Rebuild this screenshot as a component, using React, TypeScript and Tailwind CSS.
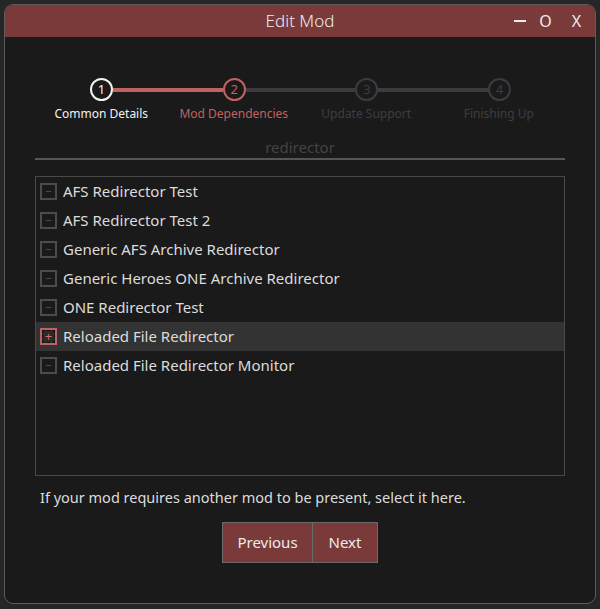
import React from 'react';

const steps = [
  { n: 1, label: 'Common Details', state: 'done' },
  { n: 2, label: 'Mod Dependencies', state: 'active' },
  { n: 3, label: 'Update Support', state: 'todo' },
  { n: 4, label: 'Finishing Up', state: 'todo' },
];

const mods = [
  { name: 'AFS Redirector Test', checked: false },
  { name: 'AFS Redirector Test 2', checked: false },
  { name: 'Generic AFS Archive Redirector', checked: false },
  { name: 'Generic Heroes ONE Archive Redirector', checked: false },
  { name: 'ONE Redirector Test', checked: false },
  { name: 'Reloaded File Redirector', checked: true },
  { name: 'Reloaded File Redirector Monitor', checked: false },
];

const circleClass: Record<string, string> = {
  done: 'border-[#f2f2f2] text-[#f2f2f2]',
  active: 'border-[#c06262] text-[#c06262]',
  todo: 'border-[#3c3c40] text-[#3c3c40]',
};

const labelClass: Record<string, string> = {
  done: 'text-[#f2f2f2]',
  active: 'text-[#c06262]',
  todo: 'text-[#3e3e42]',
};

const Stepper: React.FC = () => (
  <div className="mt-[41px]">
    {/* circles joined by lines */}
    <div className="flex items-center pl-[55px] pr-[54px]">
      {steps.map((s, i) => (
        <React.Fragment key={s.n}>
          <div
            className={`w-[23px] h-[23px] shrink-0 rounded-full border-2 flex items-center justify-center text-[13px] leading-none ${circleClass[s.state]}`}
          >
            {s.n}
          </div>
          {i < steps.length - 1 && (
            <div className={`flex-1 h-[4px] ${i === 0 ? 'bg-[#c06262]' : 'bg-[#3c3c40]'}`} />
          )}
        </React.Fragment>
      ))}
    </div>
    <div className="grid grid-cols-4 mt-[5px] text-[12px] leading-[16px] text-center">
      {steps.map(s => (
        <div key={s.n} className={labelClass[s.state]}>
          {s.label}
        </div>
      ))}
    </div>
  </div>
);

const CheckBox: React.FC<{ checked: boolean }> = ({ checked }) =>
  checked ? (
    <div className="w-[17px] h-[17px] shrink-0 border-2 border-[#c06262] bg-[#2a2a2a] flex items-center justify-center">
      <div className="w-[13px] h-[13px] border border-dashed border-[#111] flex items-center justify-center text-[#d06a6a] text-[13px] leading-none">
        +
      </div>
    </div>
  ) : (
    <div className="w-[17px] h-[17px] shrink-0 border-2 border-[#4c4c4c] flex items-center justify-center">
      <div className="w-[5px] h-px bg-[#4a4a4a]" />
    </div>
  );

export default function App() {
  return (
    <div
      className="w-[600px] h-[609px] bg-[#262626] pt-[4px] px-[4px] pb-[5px]"
      style={{ fontFamily: '"Noto Sans", "Open Sans", sans-serif' }}
    >
      <div className="h-full rounded-[9px] border border-[#5c5c5c] bg-[#1a1a1a] overflow-hidden flex flex-col">
        {/* title bar */}
        <div className="h-[32px] shrink-0 bg-[#7a3a3a] flex items-center relative">
          <div className="flex-1 text-center text-[17px] font-light text-[#ececec]">Edit Mod</div>
          <div className="absolute right-0 top-0 h-full flex items-center text-[#ececec]">
            <div className="w-[27px] flex justify-center pl-[2px]">
              <div className="w-[12px] h-[1.5px] bg-[#ececec]" />
            </div>
            <div className="w-[27px] text-center text-[16px]">O</div>
            <div className="w-[36px] text-center text-[16px] pr-[1px]">X</div>
          </div>
        </div>

        <div className="px-[30px] flex flex-col">
          <Stepper />

          {/* search */}
          <div className="mt-[15px] h-[23px] border-b-2 border-[#555] text-center text-[15px] leading-[20px] text-[#444]">
            redirector
          </div>

          {/* mod list */}
          <div className="mt-[16px] h-[300px] border border-[#4a4a4a]">
            {mods.map(m => (
              <div
                key={m.name}
                className={`h-[29px] flex items-center gap-[6px] pl-[4px] text-[15px] text-[#dcdcdc] ${m.checked ? 'bg-[#333333]' : ''}`}
              >
                <CheckBox checked={m.checked} />
                <span>{m.name}</span>
              </div>
            ))}
          </div>

          <div className="mt-[11px] pl-[5px] text-[14.5px] leading-[20px] text-[#dcdcdc]">
            If your mod requires another mod to be present, select it here.
          </div>

          <div className="mt-[15px] flex justify-center">
            <button className="w-[91px] h-[41px] bg-[#7a3a3a] border border-[#6a6a6a] text-[15px] text-[#ececec]">
              Previous
            </button>
            <button className="w-[65px] h-[41px] bg-[#7a3a3a] border border-l-0 border-[#6a6a6a] text-[15px] text-[#ececec]">
              Next
            </button>
          </div>
        </div>
      </div>
    </div>
  );
}
